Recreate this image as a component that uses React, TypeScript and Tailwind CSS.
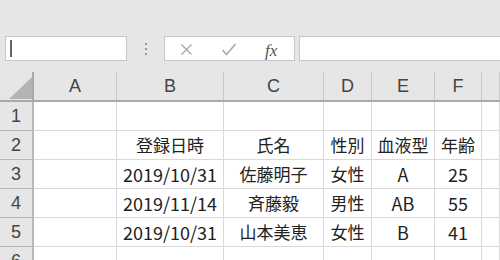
const COLS = ['A', 'B', 'C', 'D', 'E', 'F', ''];

const ROWS: string[][] = [
  ['', '', '', '', '', '', ''],
  ['', '登録日時', '氏名', '性別', '血液型', '年齢', ''],
  ['', '2019/10/31', '佐藤明子', '女性', 'A', '25', ''],
  ['', '2019/11/14', '斉藤毅', '男性', 'AB', '55', ''],
  ['', '2019/10/31', '山本美恵', '女性', 'B', '41', ''],
  ['', '', '', '', '', '', ''],
];

const grid = 'grid grid-cols-[34px_83px_107px_100px_48px_63px_47px_1fr]';

// latin values (dates, numbers, blood types) look a touch bigger than the kanji
const isLatin = (v: string) => /^[\x00-\x7f]*$/.test(v);

function FormulaBar() {
  return (
    <div className="flex items-center h-[25px] mt-[36px] pl-[5px]">
      <div className="relative w-[122px] h-full bg-white border border-[#c6c6c6]">
        <div className="absolute left-[4px] top-[3px] w-[2px] h-[17px] bg-[#666]" />
      </div>
      <div className="w-[37px] flex flex-col items-center justify-center gap-[3px]">
        <span className="w-[2px] h-[2px] bg-[#9a9a9a]" />
        <span className="w-[2px] h-[2px] bg-[#9a9a9a]" />
        <span className="w-[2px] h-[2px] bg-[#9a9a9a]" />
      </div>
      <div className="relative w-[131px] h-full bg-white border border-[#c6c6c6]">
        <svg className="absolute left-[15px] top-[6px]" width="13" height="13" viewBox="0 0 13 13">
          <path d="M1.5 1.5 L11.5 11.5 M11.5 1.5 L1.5 11.5" stroke="#a8a8a8" strokeWidth="1.4" fill="none" />
        </svg>
        <svg className="absolute left-[56px] top-[6px]" width="16" height="13" viewBox="0 0 16 13">
          <path d="M1.5 7 L5.5 11.5 L14.5 1" stroke="#a8a8a8" strokeWidth="1.6" fill="none" />
        </svg>
        <span className="absolute left-[100px] top-[1px] text-[17px] italic text-[#555] [font-family:'Liberation_Serif',serif]">
          fx
        </span>
      </div>
      <div className="ml-[4px] flex-1 h-full bg-white border-y border-l border-[#c6c6c6]" />
    </div>
  );
}

export default function App() {
  return (
    <div className="w-[500px] h-[260px] overflow-hidden bg-[#e6e6e6] [font-family:'Noto_Sans_CJK_JP',sans-serif]">
      <FormulaBar />

      <div className={`${grid} mt-[11px] h-[30px] border-b-2 border-[#a9a9a9]`}>
        <div className="relative border-r-2 border-[#a9a9a9]">
          <svg className="absolute left-[9px] top-[5px]" width="23" height="22" viewBox="0 0 23 22">
            <polygon points="23,0 23,22 0,22" fill="#b4b4b4" />
          </svg>
        </div>
        {COLS.map((c, i) => (
          <div
            key={i}
            className="flex items-center justify-center border-r border-[#c9c9c9] text-[18px] text-[#444] [font-family:'Liberation_Sans',sans-serif]"
          >
            {c}
          </div>
        ))}
      </div>

      {ROWS.map((row, r) => (
        <div key={r} className={`${grid} h-[29px]`}>
          <div className="flex items-center justify-center border-r-2 border-b border-[#b8b8b8] text-[18px] text-[#444] [font-family:'Liberation_Sans',sans-serif]">
            {r + 1}
          </div>
          {row.map((v, i) => (
            <div
              key={i}
              className={`flex items-center justify-center bg-white border-r border-b border-[#d9d9d9] text-[#222] whitespace-nowrap ${
                isLatin(v) ? 'text-[18px]' : 'text-[17px]'
              }`}
            >
              {v}
            </div>
          ))}
        </div>
      ))}
    </div>
  );
}
